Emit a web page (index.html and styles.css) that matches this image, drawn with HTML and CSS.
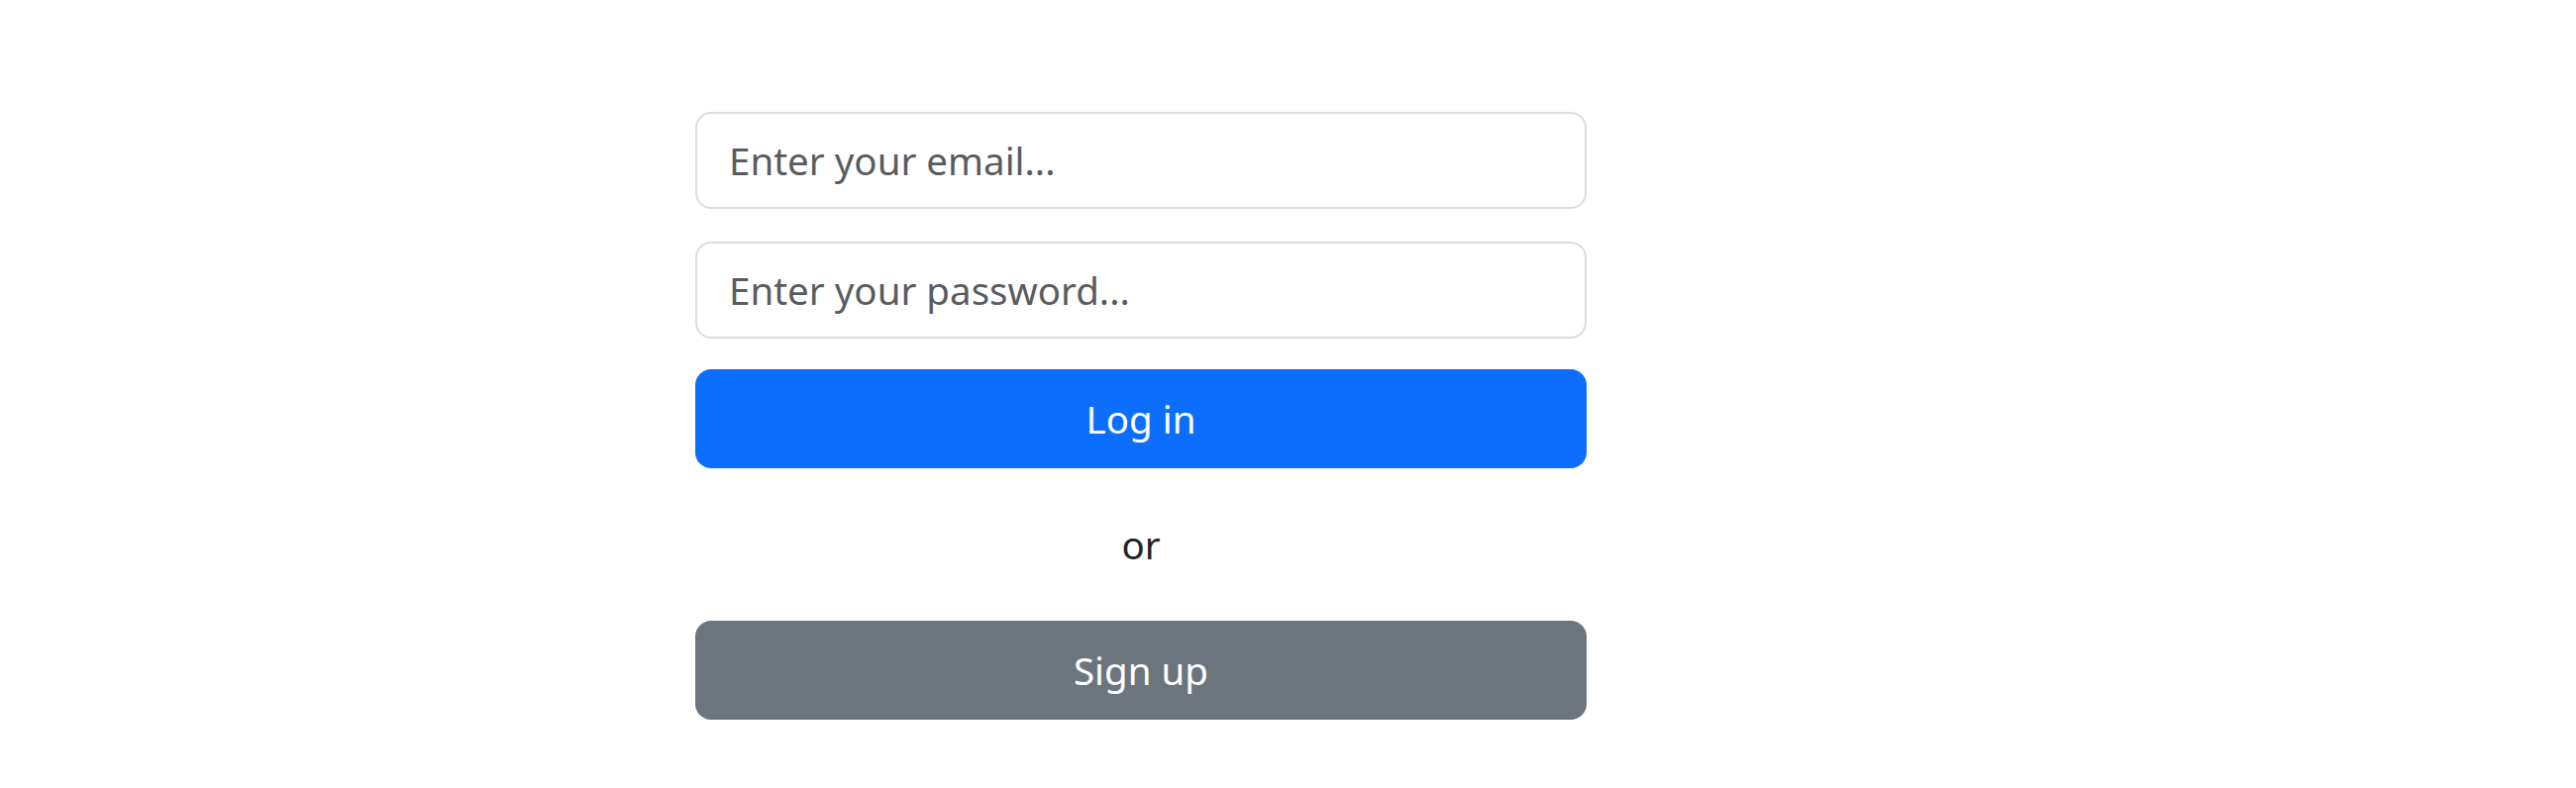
FILE: index.html
```html
<!DOCTYPE html>
<html lang="en">
<head>
<meta charset="utf-8">
<title>Log in</title>
<link rel="stylesheet" href="styles.css">
</head>
<body>
<main class="page">
  <form class="login-form">
    <input class="field" type="email" placeholder="Enter your email...">
    <input class="field field-password" type="password" placeholder="Enter your password...">
    <button class="btn btn-primary" type="button">Log in</button>
    <p class="divider">or</p>
    <button class="btn btn-secondary" type="button">Sign up</button>
  </form>
</main>
</body>
</html>
```

FILE: styles.css
```css
html, body {
  margin: 0;
  padding: 0;
  background: #ffffff;
}

body {
  font-family: "Noto Sans", "Open Sans", "DejaVu Sans", sans-serif;
  color: #212529;
}

.page {
  padding: 113px 0 0 702px;
}

.login-form {
  width: 900px;
  display: flex;
  flex-direction: column;
  margin: 0;
}

.field {
  box-sizing: border-box;
  height: 98px;
  width: 100%;
  padding: 0 32px;
  border: 2px solid #dcdcdc;
  border-radius: 16px;
  font-family: inherit;
  font-size: 38.5px;
  color: #212529;
  background: #fff;
  outline: none;
}

.field::placeholder {
  color: #595c5f;
  opacity: 1;
}

.field-password {
  margin-top: 33px;
}

.btn {
  box-sizing: border-box;
  height: 100px;
  width: 100%;
  border: none;
  border-radius: 16px;
  font-family: inherit;
  font-size: 38.5px;
  color: #ffffff;
  cursor: pointer;
}

.btn-primary {
  margin-top: 31px;
  background: #0d6efd;
}

.btn-secondary {
  background: #6c757d;
}

.divider {
  margin: 0;
  height: 154px;
  display: flex;
  align-items: center;
  justify-content: center;
  font-size: 38.5px;
  color: #212529;
}
```
